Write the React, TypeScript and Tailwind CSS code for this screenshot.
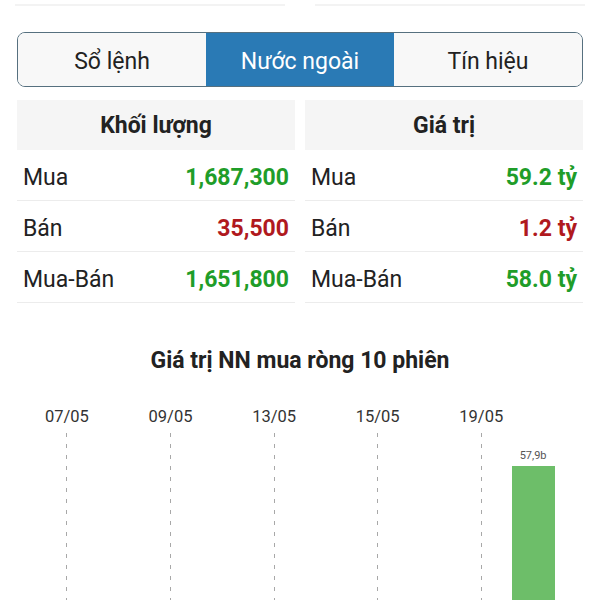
import { useState } from 'react';

const tabs = ['Sổ lệnh', 'Nước ngoài', 'Tín hiệu'];

type Row = { label: string; value: string; tone: 'up' | 'down' };

const volume: Row[] = [
  { label: 'Mua', value: '1,687,300', tone: 'up' },
  { label: 'Bán', value: '35,500', tone: 'down' },
  { label: 'Mua-Bán', value: '1,651,800', tone: 'up' },
];

const amount: Row[] = [
  { label: 'Mua', value: '59.2 tỷ', tone: 'up' },
  { label: 'Bán', value: '1.2 tỷ', tone: 'down' },
  { label: 'Mua-Bán', value: '58.0 tỷ', tone: 'up' },
];

// 10 sessions, label shown every other one
const sessions = [
  { date: '07/05', value: 0 },
  { date: '08/05', value: 0 },
  { date: '09/05', value: 0 },
  { date: '12/05', value: 0 },
  { date: '13/05', value: 0 },
  { date: '14/05', value: 0 },
  { date: '15/05', value: 0 },
  { date: '16/05', value: 0 },
  { date: '19/05', value: 0 },
  { date: '20/05', value: 57.9 },
];

function StatTable({ title, rows }: { title: string; rows: Row[] }) {
  return (
    <div className="flex flex-col">
      <div className="h-[50px] bg-[#f5f5f5] flex items-center justify-center pt-[2px] text-[23px] font-bold text-[#222]">
        {title}
      </div>
      {rows.map((r) => (
        <div
          key={r.label}
          className="h-[51px] border-b border-[#ececec] flex items-center justify-between px-[6px] pt-[7px]"
        >
          <span className="text-[23px] text-[#222]">{r.label}</span>
          <span
            className={
              r.tone === 'up'
                ? 'text-[23px] font-bold text-[#1f9d29]'
                : 'text-[23px] font-bold text-[#b0191e]'
            }
          >
            {r.value}
          </span>
        </div>
      ))}
    </div>
  );
}

export default function App() {
  const [active, setActive] = useState(1);

  return (
    <div className="w-[600px] h-[600px] overflow-hidden bg-white font-['Roboto',sans-serif] px-[17px]">
      <div className="grid grid-cols-2 gap-[30px] -mx-[2px]">
        <div className="h-[6px] border-b-2 border-[#f3f3f3]" />
        <div className="h-[6px] border-b-2 border-[#f3f3f3]" />
      </div>

      <div className="mt-[26px] h-[55px] grid grid-cols-3 rounded-[8px] border-[1.5px] border-[#56707f] overflow-hidden">
        {tabs.map((t, i) => (
          <button
            key={t}
            onClick={() => setActive(i)}
            className={
              i === active
                ? 'bg-[#2a7ab5] text-white text-[23px] pt-[5px] flex items-center justify-center'
                : 'bg-[#f8f8f8] text-[#222] text-[23px] pt-[5px] flex items-center justify-center'
            }
          >
            {t}
          </button>
        ))}
      </div>

      <div className="mt-[13px] grid grid-cols-2 gap-[10px]">
        <StatTable title="Khối lượng" rows={volume} />
        <StatTable title="Giá trị" rows={amount} />
      </div>

      <h2 className="mt-[44px] text-center text-[23px] leading-[28px] font-bold text-[#222]">
        Giá trị NN mua ròng 10 phiên
      </h2>

      <div className="mt-[30px] ml-[24px] w-[518px] grid grid-cols-10">
        {sessions.map((s, i) => {
          const labeled = i % 2 === 0;
          return (
            <div key={s.date} className="flex flex-col items-center">
              <div className="h-[24px] leading-[24px] text-[16.5px] text-[#333] whitespace-nowrap">
                {labeled ? s.date : ''}
              </div>
              <div className="relative mt-[4px] h-[200px] w-full flex justify-center">
                {labeled && (
                  <div className="w-px h-full bg-[repeating-linear-gradient(to_bottom,#a8a8a8_0px,#a8a8a8_4px,transparent_4px,transparent_11px)]" />
                )}
                {s.value > 0 && (
                  <div className="absolute inset-x-0 top-[17px] flex flex-col items-center">
                    <span className="text-[11px] leading-[12px] text-[#555]">
                      {s.value.toFixed(1).replace('.', ',')}b
                    </span>
                    <div className="mt-[4px] w-[43px] h-[180px] bg-[#6dbe69]" />
                  </div>
                )}
              </div>
            </div>
          );
        })}
      </div>
    </div>
  );
}
